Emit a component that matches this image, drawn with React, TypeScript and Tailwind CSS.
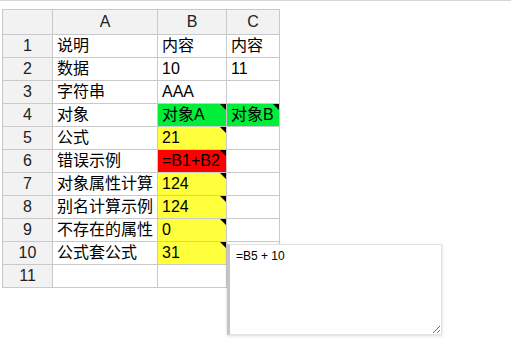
type Cell = { v: string; bg?: string; note?: boolean }

const rows: Cell[][] = [
  [{ v: "说明" }, { v: "内容" }, { v: "内容" }],
  [{ v: "数据" }, { v: "10" }, { v: "11" }],
  [{ v: "字符串" }, { v: "AAA" }, { v: "" }],
  [{ v: "对象" }, { v: "对象A", bg: "bg-[#00ee3a]", note: true }, { v: "对象B", bg: "bg-[#00ee3a]", note: true }],
  [{ v: "公式" }, { v: "21", bg: "bg-[#ffff3c]", note: true }, { v: "" }],
  [{ v: "错误示例" }, { v: "=B1+B2", bg: "bg-[#ff0000]", note: true }, { v: "" }],
  [{ v: "对象属性计算" }, { v: "124", bg: "bg-[#ffff3c]", note: true }, { v: "" }],
  [{ v: "别名计算示例" }, { v: "124", bg: "bg-[#ffff3c]", note: true }, { v: "" }],
  [{ v: "不存在的属性" }, { v: "0", bg: "bg-[#ffff3c]", note: true }, { v: "" }],
  [{ v: "公式套公式" }, { v: "31", bg: "bg-[#ffff3c]", note: true }, { v: "" }],
  [{ v: "" }, { v: "" }, { v: "" }],
]

const font = "font-['Liberation_Sans','Noto_Sans_CJK_SC',sans-serif]"

export default function App() {
  return (
    <div className={`relative w-[511px] h-[359px] bg-white border-t border-[#d6d6d6] ${font}`}>
      <table className="ml-[2px] mt-[8px] border-collapse table-fixed text-[16px] text-black">
        <thead>
          <tr className="h-[25px] bg-[#f2f2f2] leading-[20px]">
            <th className="w-[50px] p-0 border border-[#c9c9c9]" />
            <th className="w-[105px] p-0 border border-[#c9c9c9] font-normal text-[#222]">A</th>
            <th className="w-[69px] p-0 border border-[#c9c9c9] font-normal text-[#222]">B</th>
            <th className="w-[53px] p-0 border border-[#c9c9c9] font-normal text-[#222]">C</th>
          </tr>
        </thead>
        <tbody>
          {rows.map((r, i) => (
            <tr key={i} className="h-[23px]">
              <td className="bg-[#f2f2f2] border border-[#c9c9c9] p-0 text-center leading-[20px] text-[#222]">
                {i + 1}
              </td>
              {r.map((c, j) => (
                <td
                  key={j}
                  className={`relative border border-[#c9c9c9] pl-[4px] pr-0 py-0 leading-[20px] whitespace-nowrap overflow-hidden ${c.bg ?? ""}`}
                >
                  {c.v}
                  {c.note && (
                    <span className="absolute top-0 right-0 w-0 h-0 border-t-[6px] border-l-[6px] border-t-black border-l-transparent" />
                  )}
                </td>
              ))}
            </tr>
          ))}
        </tbody>
      </table>

      {/* cell comment editor */}
      <textarea
        defaultValue="=B5 + 10"
        className="absolute left-[227px] top-[243px] w-[215px] h-[91px] border border-[#e2e2e2] border-l-[3px] border-l-[#c4c4c4] bg-white px-[6px] pt-[3px] text-[12px] leading-[16px] text-black outline-none shadow-[0_1px_3px_rgba(0,0,0,0.15)]"
      />
    </div>
  )
}
